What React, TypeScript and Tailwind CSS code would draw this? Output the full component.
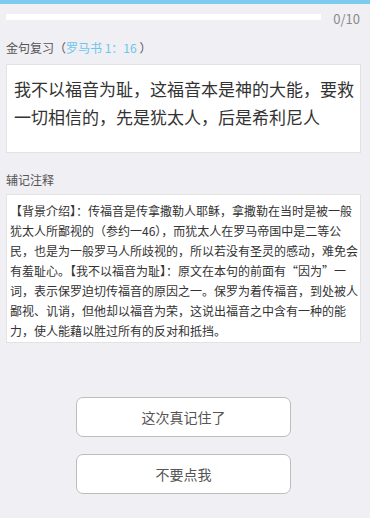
import React from "react";

const notes: string[] = [
  "【背景介绍】：传福音是传拿撒勒人耶稣，拿撒勒在当时是被一般",
  "犹太人所鄙视的（参约一46），而犹太人在罗马帝国中是二等公",
  "民，也是为一般罗马人所歧视的，所以若没有圣灵的感动，难免会",
  "有羞耻心。【我不以福音为耻】：原文在本句的前面有“因为”一",
  "词，表示保罗迫切传福音的原因之一。保罗为着传福音，到处被人",
  "鄙视、讥诮，但他却以福音为荣，这说出福音之中含有一种的能",
  "力，使人能藉以胜过所有的反对和抵挡。",
];

export default function App() {
  return (
    <div className="w-[370px] h-[518px] bg-[#efeff4] font-['Noto_Sans_CJK_SC',sans-serif] overflow-hidden">
      <div className="h-[4px] bg-[#7dcbee]" />
      <div className="mt-[10px] h-[6px] flex items-start pl-[6px] pr-[10px]">
        <div className="w-[315px] h-[6px] bg-white" />
        <div className="ml-auto -mt-[3px] text-[13px] leading-[16px] text-[#8a8a8a]">0/10</div>
      </div>
      <div className="mt-[20px] pl-[6px] text-[12px] leading-[16px] text-[#555]">
        金句复习（<span className="text-[#6ec5ec]">罗马书 1：16 </span>）
      </div>
      <div className="mt-[8px] ml-[6px] w-[355px] bg-white border border-[#e2e2e2] pt-[10px] pb-[21px] px-[7px] text-[17px] leading-[28px] text-[#333]">
        <div className="whitespace-nowrap">我不以福音为耻，这福音本是神的大能，要救</div>
        <div className="whitespace-nowrap">一切相信的，先是犹太人，后是希利尼人</div>
      </div>
      <div className="mt-[19px] pl-[6px] text-[12px] leading-[16px] text-[#555]">辅记注释</div>
      <div className="mt-[6px] ml-[6px] w-[355px] bg-white border border-[#e2e2e2] pt-[6px] pb-[1px] px-[3px] text-[12px] leading-[20px] text-[#333] [text-spacing-trim:space-first]">
        {notes.map((l, i) => (
          <div key={i} className="whitespace-nowrap">
            {l}
          </div>
        ))}
      </div>
      <div className="mt-[54px] ml-[76px] w-[215px] flex flex-col gap-[17px]">
        <button className="h-[40px] w-full bg-white border border-[#bdbdbd] rounded-[7px] text-[14px] text-[#555]">
          这次真记住了
        </button>
        <button className="h-[40px] w-full bg-white border border-[#bdbdbd] rounded-[7px] text-[14px] text-[#555]">
          不要点我
        </button>
      </div>
    </div>
  );
}
